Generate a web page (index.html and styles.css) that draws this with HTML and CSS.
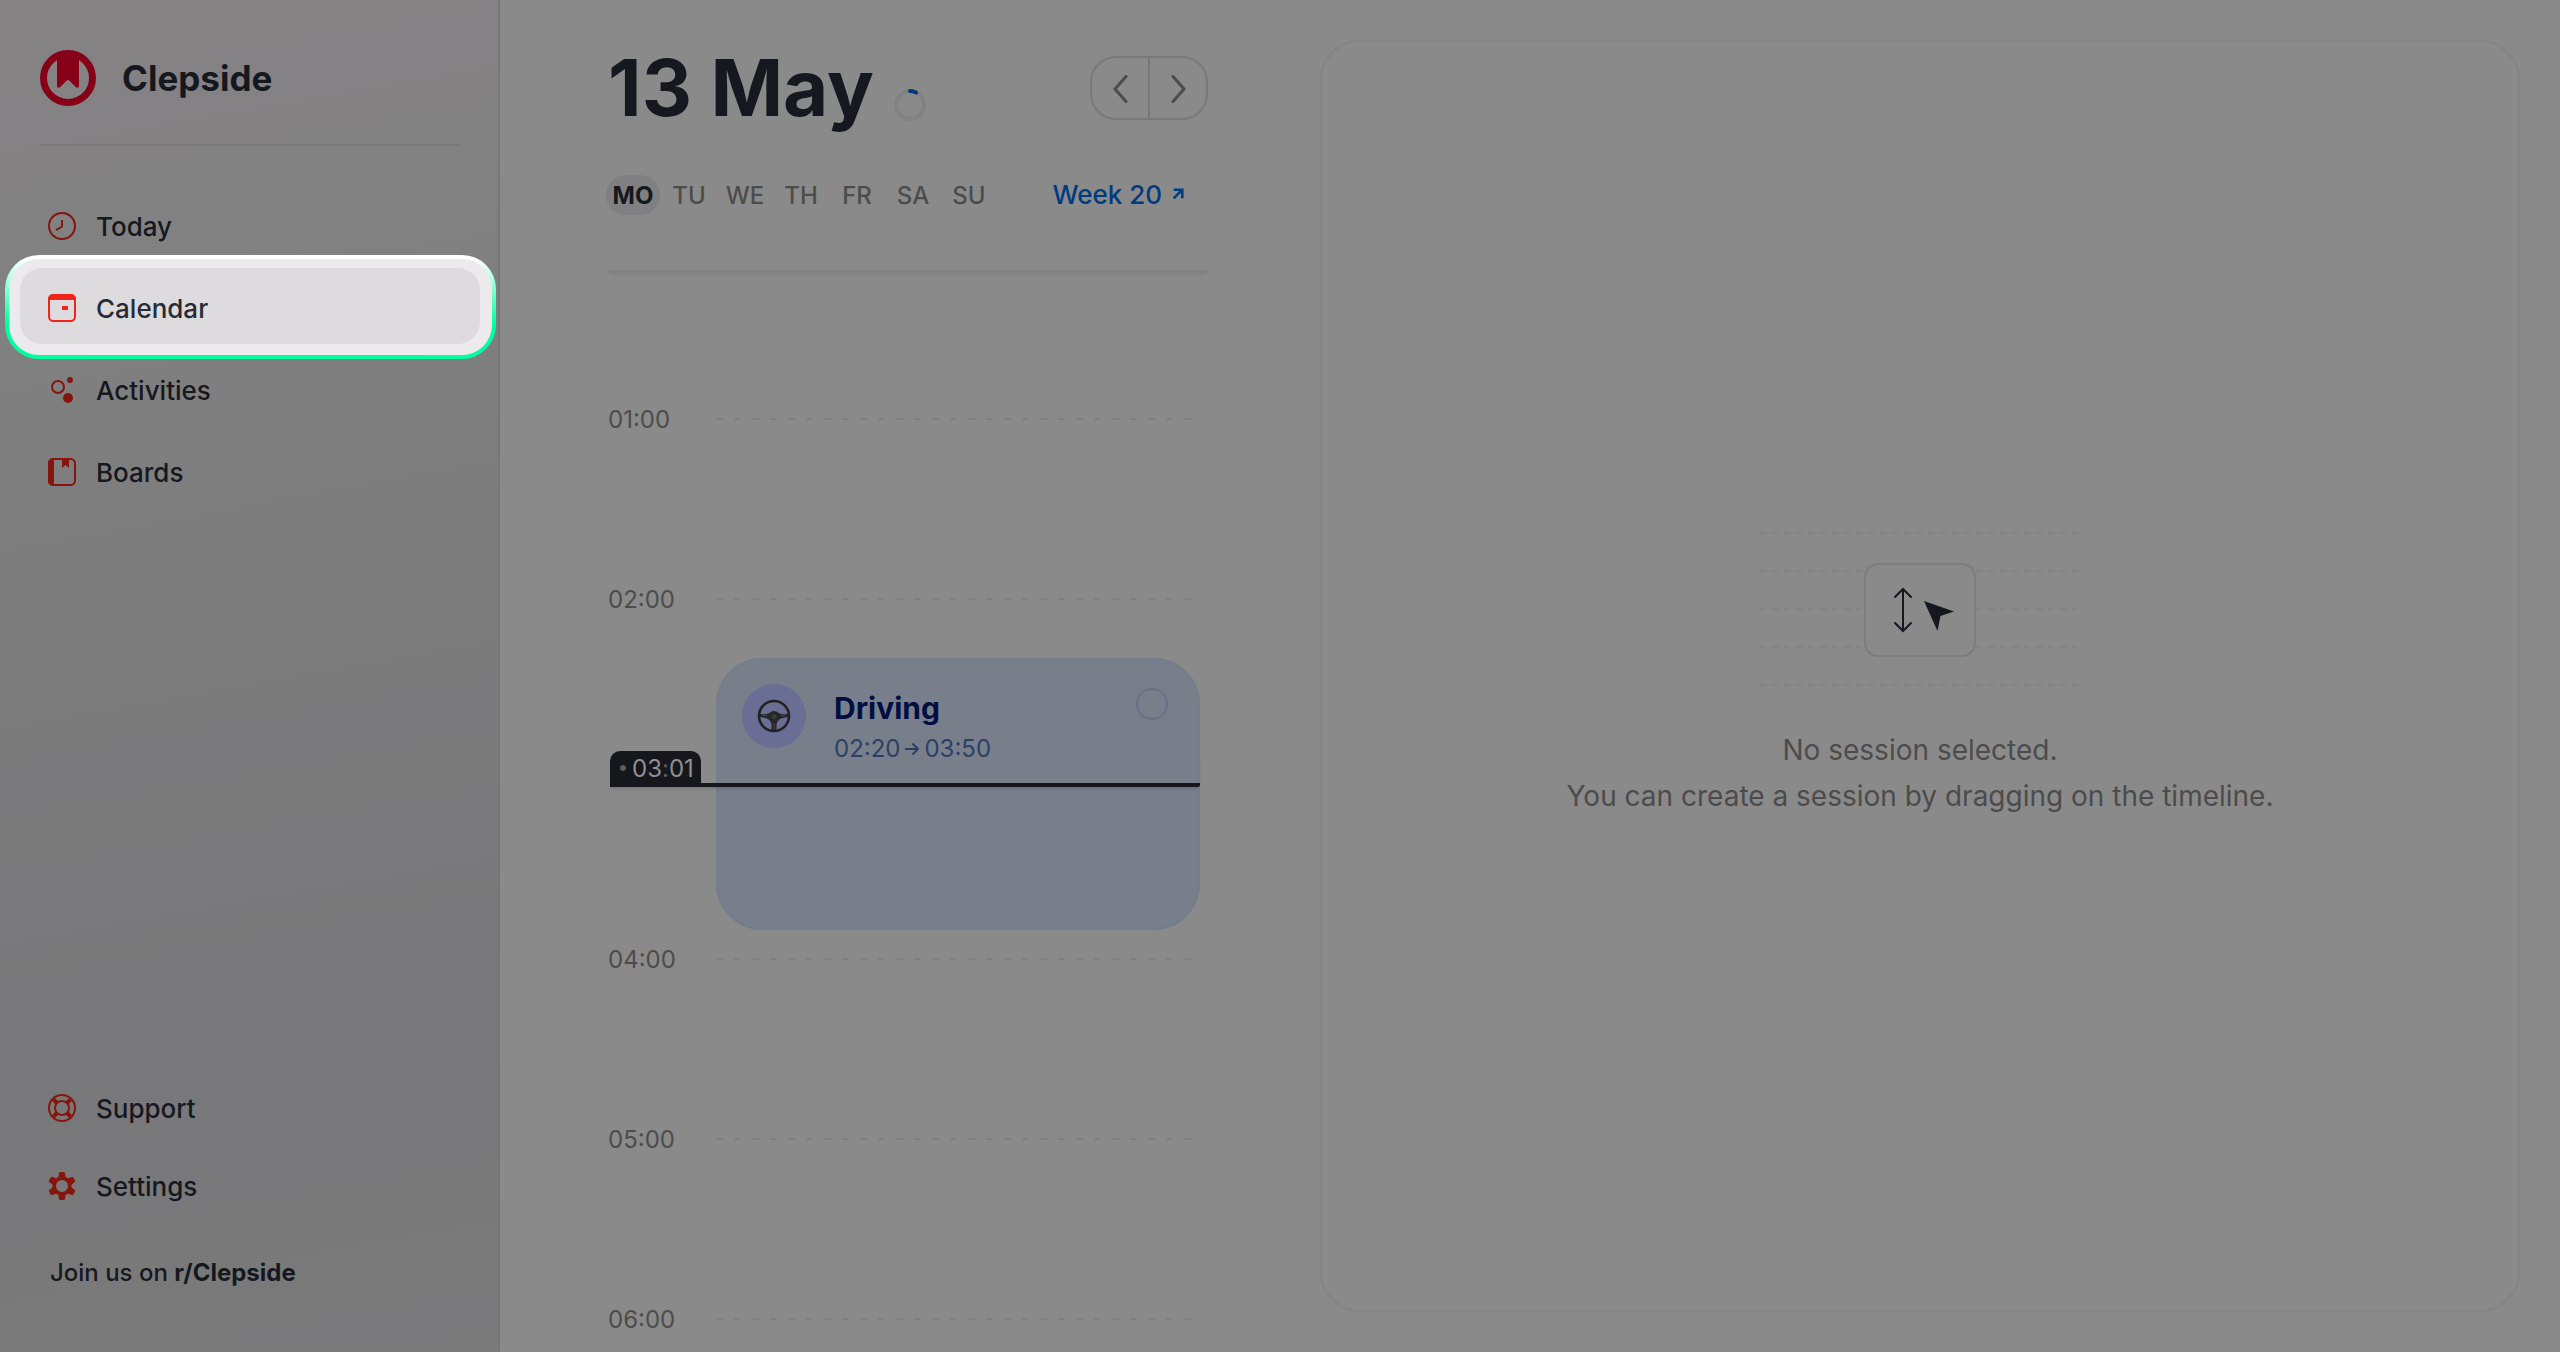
FILE: index.html
```
<!DOCTYPE html>
<html lang="en">
<head>
    <meta charset="UTF-8">
    <meta name="viewport" content="width=device-width, initial-scale=1.0">
    <title>Clepside</title>
    <link rel="stylesheet" href="styles.css">
</head>
<body>
    <div class="app">
        <aside class="sidebar">
            <div class="brand">
                <svg class="logo" viewBox="0 0 56 56">
                    <circle cx="28" cy="28" r="24.5" fill="none" stroke="#860018" stroke-width="7"/>
                    <path d="M17 6h22v29.500c0 2.300-1.800 3-3.200 1.500l-6.300-6.300q-1.500-1.500-3 0L20.200 37c-1.400 1.500-3.200.800-3.200-1.500z" fill="#860018"/>
                </svg>
                <span class="brand-name">Clepside</span>
            </div>

            <nav class="menu">
                <a class="menu-item" href="#today">
                    <svg class="icon" viewBox="0 0 28 28" fill="none" stroke="currentColor" stroke-width="2">
                        <circle cx="14" cy="14" r="13"/>
                        <path d="M14 8v5.500c0 1-.4 1.500-1.300 2L8 18"/>
                    </svg>
                    <span>Today</span>
                </a>
                <a class="menu-item active" href="#calendar">
                    <svg class="icon" viewBox="0 0 28 28">
                        <rect x="1" y="1" width="26" height="26" rx="4.500" fill="none" stroke="currentColor" stroke-width="2"/>
                        <path d="M0 6V5a5 5 0 0 1 5-5h18a5 5 0 0 1 5 5v1z" fill="currentColor"/>
                        <rect x="14" y="12" width="6" height="4" fill="currentColor"/>
                    </svg>
                    <span>Calendar</span>
                </a>
                <a class="menu-item" href="#activities">
                    <svg class="icon" viewBox="0 0 28 28">
                        <circle cx="10" cy="11" r="6" fill="none" stroke="currentColor" stroke-width="2"/>
                        <circle cx="22" cy="4" r="3" fill="currentColor"/>
                        <circle cx="20" cy="22" r="5" fill="currentColor"/>
                    </svg>
                    <span>Activities</span>
                </a>
                <a class="menu-item" href="#boards">
                    <svg class="icon" viewBox="0 0 28 28">
                        <rect x="1" y="1" width="26" height="26" rx="4.500" fill="none" stroke="currentColor" stroke-width="2"/>
                        <path d="M6 0H5a5 5 0 0 0-5 5v18a5 5 0 0 0 5 5h1zM14 1h7v9l-3.500-3L14 10z" fill="currentColor"/>
                    </svg>
                    <span>Boards</span>
                </a>
            </nav>

            <nav class="menu menu-bottom">
                <a class="menu-item" href="#support">
                    <svg class="icon" viewBox="0 0 28 28" fill="none" stroke="currentColor" stroke-width="2">
                        <circle cx="14" cy="14" r="13"/>
                        <circle cx="14" cy="14" r="7"/>
                        <path d="M5.500 5.500L9 9M22.500 5.500L19 9M5.500 22.500L9 19M22.500 22.500L19 19" stroke-width="4"/>
                    </svg>
                    <span>Support</span>
                </a>
                <a class="menu-item" href="#settings">
                    <svg class="icon" viewBox="0 0 28 28">
                        <path fill="currentColor" fill-rule="evenodd" d="M12.200 0h3.600q1 0 1.200 1l.5 3.200q.2.900 1 1.300l.8.500q.7.400 1.500.1l3-1.200q1-.4 1.500.5l1.800 3.100q.5.900-.3 1.500l-2.500 2q-.8.600-.8 1.500v1q0 .9.800 1.500l2.500 2q.8.600.3 1.500l-1.800 3.100q-.5.900-1.500.5l-3-1.200q-.8-.3-1.500.1l-.8.500q-.8.400-1 1.300L17 27q-.2 1-1.200 1h-3.600q-1 0-1.200-1l-.5-3.200q-.2-.9-1-1.300l-.8-.5q-.7-.4-1.500-.1l-3 1.200q-1 .4-1.500-.5L.9 19.500q-.5-.9.3-1.500l2.500-2q.8-.6.800-1.500v-1q0-.9-.8-1.500l-2.500-2q-.8-.6-.3-1.500l1.800-3.100q.5-.9 1.500-.5l3 1.200q.8.300 1.500-.1l.8-.5q.8-.4 1-1.300L11 1q.2-1 1.200-1zM14 8a6 6 0 1 0 0 12 6 6 0 0 0 0-12z"/>
                    </svg>
                    <span>Settings</span>
                </a>
            </nav>
            <p class="join">Join us on <a href="#reddit">r/Clepside</a></p>
        </aside>

        <main class="main">
            <section class="schedule">
                <header class="schedule-header">
                    <div class="title-row">
                        <h1>13 May</h1>
                        <svg class="progress" viewBox="0 0 32 32" fill="none" stroke-width="4">
                            <circle cx="16" cy="16" r="14" stroke="#828282"/>
                            <path d="M16 2q3.200 0 6 1.500" stroke="#00397a" stroke-linecap="round"/>
                        </svg>
                        <div class="pager">
                            <button aria-label="Previous day">
                                <svg viewBox="0 0 16 28"><path d="M14 1.500L3 14l11 12.500"/></svg>
                            </button>
                            <button aria-label="Next day">
                                <svg viewBox="0 0 16 28"><path d="M3 1.500L14 14 3 26.500"/></svg>
                            </button>
                        </div>
                    </div>
                    <div class="week-row">
                        <div class="days">
                            <button class="day selected">MO</button>
                            <button class="day">TU</button>
                            <button class="day">WE</button>
                            <button class="day">TH</button>
                            <button class="day">FR</button>
                            <button class="day">SA</button>
                            <button class="day">SU</button>
                        </div>
                        <a class="week-link" href="#week">
                            Week 20
                            <svg viewBox="0 0 14 14"><path d="M2 2h10v10M12 2L2 12"/></svg>
                        </a>
                    </div>
                </header>

                <div class="timeline">
                    <div class="hour"><span>01:00</span><i></i></div>
                    <div class="hour"><span>02:00</span><i></i></div>
                    <div class="hour covered"><span>03:00</span><i></i></div>
                    <div class="hour"><span>04:00</span><i></i></div>
                    <div class="hour"><span>05:00</span><i></i></div>
                    <div class="hour"><span>06:00</span><i></i></div>

                    <article class="session">
                        <div class="session-icon">
                            <svg viewBox="0 0 34 34">
                                <circle cx="17" cy="17" r="15" fill="none" stroke="#222" stroke-width="2.600"/>
                                <path d="M3 15q6 .8 9-.8 5-4.500 10 0 3 1.600 9 .8v3q-5.500.2-8.500 2.200-2.500 2-3 4.800v6h-5v-6q-.5-2.800-3-4.800-3-2-8.500-2.200z" fill="#262626"/>
                                <circle cx="17" cy="17.500" r="2.600" fill="#3a3a3a"/>
                                <path d="M17 24v7M6 16.500h4M24 16.500h4" stroke="#4a4a4a" stroke-width="1"/>
                            </svg>
                        </div>
                        <div class="session-text">
                            <h2>Driving</h2>
                            <p>
                                02:20
                                <svg viewBox="0 0 14 14"><path d="M0 7h13M7.500 1.500L13 7l-5.500 5.500"/></svg>
                                03:50
                            </p>
                        </div>
                        <input class="session-check" type="checkbox" aria-label="Mark Driving as done">
                    </article>

                    <div class="now">
                        <span class="now-label"><b></b>03<em>:</em>01</span>
                    </div>
                </div>
            </section>

            <section class="detail">
                <svg class="illustration" viewBox="0 0 320 160" fill="none">
                    <path d="M0 4h319M0 42h319M0 80h319M0 118h319M0 156h319" stroke="#838383" stroke-width="2" stroke-dasharray="6 6"/>
                    <rect x="105" y="35" width="110" height="92" rx="13" fill="#8a8a8a" stroke="#7d7d7d" stroke-width="2"/>
                    <path d="M143 60v42" stroke="#15181e" stroke-width="2"/>
                    <path d="M135 68l8-8 8 8M135 94l8 8 8-8" stroke="#15181e" stroke-width="2" stroke-linecap="round"/>
                    <path d="M164 72l30 10.500-13.500 4.500L177.500 102z" fill="#15181e"/>
                </svg>
                <p>No session selected.<br>You can create a session by dragging on the timeline.</p>
            </section>
        </main>
    </div>
</body>
</html>
```
FILE: styles.css
```
* {
    box-sizing: border-box;
}

body {
    margin: 0;
    font-family: Inter, "Liberation Sans", sans-serif;
    font-size: 26px;
    color: #15181e;
    background-color: #8a8a8a;
}

h1, h2, p {
    margin: 0;
}

a {
    color: inherit;
    text-decoration: none;
}

button {
    padding: 0;
    border: none;
    background: none;
    font: inherit;
    color: inherit;
    cursor: pointer;
}

.app {
    display: flex;
    height: 100vh;
    overflow: hidden;
}

/* Sidebar */
.sidebar {
    display: flex;
    flex-direction: column;
    flex: none;
    width: 500px;
    padding: 0 18px 62px 20px;
    border-right: 2px solid #767678;
    background: linear-gradient(170deg, #858284 0%, #828182 18%, #7c7c7d 45%, #78787a 75%, #7a7a7b 100%);
}

.brand {
    display: flex;
    align-items: center;
    gap: 26px;
    height: 146px;
    margin: 0 20px 40px;
    padding-top: 12px;
    border-bottom: 2px solid #7a797b;
}

.logo {
    width: 56px;
    height: 56px;
}

.brand-name {
    font-size: 35px;
    font-weight: 700;
}

.menu {
    display: flex;
    flex-direction: column;
    gap: 6px;
}

.menu-item {
    display: flex;
    align-items: center;
    gap: 20px;
    height: 76px;
    padding: 4px 28px 0;
    border-radius: 22px;
    font-weight: 500;
}

.menu-item .icon {
    width: 28px;
    height: 28px;
    color: #86150d;
}

.menu-item.active {
    position: relative;
    color: #262b35;
}

.menu-item.active .icon {
    position: relative;
    color: #f02418;
}

.menu-item.active span {
    position: relative;
}

/* Highlight ring around the current page */
.menu-item.active::before {
    content: "";
    position: absolute;
    inset: -13px -16px -15px -15px;
    border: 4px solid transparent;
    border-radius: 34px;
    background:
        linear-gradient(#eceaed, #eceaed) padding-box,
        linear-gradient(#ffffff 0%, #ffffff 4%, #00ffa0 65%) border-box;
}

.menu-item.active::after {
    content: "";
    position: absolute;
    inset: 0;
    z-index: 0;
    border-radius: 22px;
    background-color: #dddbde;
}

.menu-item.active .icon,
.menu-item.active span {
    z-index: 1;
}

.menu-bottom {
    gap: 2px;
    margin-top: auto;
}

.join {
    margin: 34px 30px 0;
    font-size: 24px;
    line-height: 34px;
    font-weight: 500;
}

.join a {
    font-weight: 700;
}

/* Main area */
.main {
    display: flex;
    flex: 1;
    gap: 112px;
    min-width: 0;
    padding-left: 108px;
}

.schedule {
    flex: none;
    width: 600px;
}

.schedule-header {
    height: 273px;
    border-bottom: 3px solid #828284;
    box-shadow: 0 5px 4px -3px rgba(0, 0, 0, 0.05);
}

.title-row {
    display: flex;
    align-items: center;
    height: 175px;
}

h1 {
    font-size: 78px;
    font-weight: 700;
}

.progress {
    width: 32px;
    height: 32px;
    margin: 34px 0 0 20px;
}

.pager {
    display: flex;
    width: 118px;
    height: 64px;
    margin-left: auto;
    border: 2px solid #797979;
    border-radius: 26px;
}

.pager button {
    flex: 1;
}

.pager button + button {
    border-left: 2px solid #797979;
}

.pager svg {
    width: 16px;
    height: 28px;
    fill: none;
    stroke: #4c4c4c;
    stroke-width: 3;
    stroke-linecap: round;
    vertical-align: middle;
}

.week-row {
    display: flex;
    align-items: center;
    justify-content: space-between;
    height: 40px;
}

.days {
    display: flex;
    gap: 2px;
    margin-left: -2px;
}

.day {
    width: 54px;
    height: 40px;
    border-radius: 20px;
    font-size: 24px;
    font-weight: 500;
    color: #4c4c4c;
}

.day.selected {
    background-color: #808083;
    font-weight: 700;
    color: #15181e;
}

.week-link {
    display: flex;
    align-items: center;
    gap: 10px;
    padding: 0 24px 2px 0;
    font-weight: 500;
    color: #003b80;
}

.week-link svg {
    width: 12px;
    height: 12px;
    fill: none;
    stroke: currentColor;
    stroke-width: 3;
}

/* Timeline */
.timeline {
    position: relative;
    padding-top: 56px;
}

.hour {
    display: flex;
    align-items: center;
    height: 180px;
    font-size: 24px;
    color: #4c4c4c;
}

.hour span {
    width: 96px;
}

.hour i {
    width: 488px;
    height: 2px;
    background: repeating-linear-gradient(90deg, #808080 0 1px, transparent 1px 12px, #808080 12px 18px);
}

.hour.covered span {
    visibility: hidden;
}

.session {
    position: absolute;
    top: 385px;
    left: 108px;
    right: 8px;
    display: flex;
    align-items: flex-start;
    height: 272px;
    padding: 24px 30px 24px 24px;
    border: 2px solid #737d8d;
    border-radius: 46px;
    background-color: #787f8b;
}

.session-icon {
    display: flex;
    align-items: center;
    justify-content: center;
    width: 64px;
    height: 64px;
    border-radius: 50%;
    background-color: #6a6d94;
}

.session-icon svg {
    width: 34px;
    height: 34px;
}

.session-text {
    flex: 1;
    padding: 4px 0 0 28px;
}

.session-text h2 {
    font-size: 30px;
    line-height: 40px;
    color: #000f42;
}

.session-text p {
    display: flex;
    align-items: center;
    gap: 5px;
    font-size: 24px;
    line-height: 42px;
    color: #2c3f66;
}

.session-text svg {
    width: 14px;
    height: 14px;
    fill: none;
    stroke: currentColor;
    stroke-width: 2;
}

.session-check {
    appearance: none;
    width: 32px;
    height: 32px;
    margin: 4px 0 0;
    border: 2px solid #687087;
    border-radius: 50%;
}

/* Current time marker */
.now {
    position: absolute;
    top: 478px;
    left: 2px;
    right: 8px;
    border-bottom: 4px solid #15171d;
    border-radius: 0 2px 2px 0;
    box-shadow: 0 3px 3px -1px rgba(0, 0, 0, 0.12);
}

.now-label {
    display: flex;
    align-items: center;
    width: 91px;
    height: 32px;
    padding: 2px 0 0 10px;
    border-radius: 10px 10px 0 0;
    background-color: #15171d;
    font-size: 24px;
    color: #8f8f90;
}

.now-label b {
    width: 6px;
    height: 6px;
    margin-right: 6px;
    border-radius: 50%;
    background-color: #5b5c60;
}

.now-label em {
    font-style: normal;
    color: #5b5c60;
}

/* Session detail */
.detail {
    display: flex;
    flex: 1;
    flex-direction: column;
    align-items: center;
    justify-content: center;
    gap: 38px;
    margin: 40px 40px 40px 0;
    padding-bottom: 4px;
    border: 2px solid #848484;
    border-radius: 40px;
}

.illustration {
    width: 320px;
    height: 160px;
}

.detail p {
    font-size: 28px;
    line-height: 46px;
    text-align: center;
    color: #4c4c4c;
}
```
